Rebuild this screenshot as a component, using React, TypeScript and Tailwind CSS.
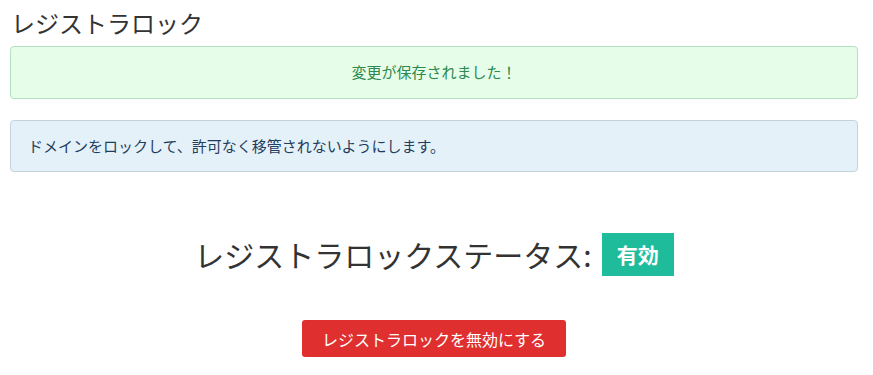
export default function App() {
  return (
    <div className="min-h-[375px] bg-white pl-[10px] pr-[15px] font-['Noto_Sans_CJK_JP','Noto_Sans',sans-serif] text-[#333]">
      <h1 className="pt-[8px] text-[24px] leading-[30px] pl-[1px] font-normal">レジストラロック</h1>

      {/* success alert */}
      <div className="mt-[8px] flex h-[53px] items-center justify-center rounded-[4px] border border-[#b5dfc2] bg-[#e6fdea] text-[15px] text-[#2b8a4e]">
        変更が保存されました！
      </div>

      {/* info alert */}
      <div className="mt-[21px] flex h-[52px] items-center rounded-[4px] border border-[#c2d3de] bg-[#e5f1f9] px-[17px] text-[15px] text-[#1f3d5c]">
        ドメインをロックして、許可なく移管されないようにします。
      </div>

      <div className="mt-[61px] flex items-center justify-center gap-[10px]">
        <span className="text-[30px] leading-[43px]">レジストラロックステータス:</span>
        <span className="flex h-[43px] items-center bg-[#1fbc9c] px-[15px] text-[21px] font-bold text-white">
          有効
        </span>
      </div>

      <div className="mt-[44px] flex justify-center">
        <button className="h-[37px] w-[264px] rounded-[3px] bg-[#e02f2f] text-[16px] text-white">
          レジストラロックを無効にする
        </button>
      </div>
    </div>
  );
}
